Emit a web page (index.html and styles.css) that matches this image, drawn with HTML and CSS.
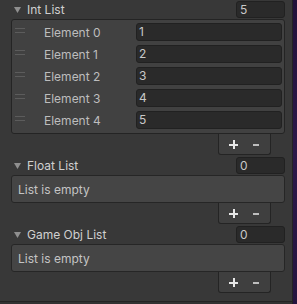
FILE: index.html
```html
<!DOCTYPE html>
<html>
<head>
<meta charset="utf-8">
<link rel="stylesheet" href="styles.css">
</head>
<body>
<div class="inspector">
  <div class="content">
    <section class="list">
      <div class="list-header">
        <svg class="foldout" width="7" height="6" viewBox="0 0 7 6"><polygon points="0,0 7,0 3.5,6" fill="#8f8f8f"/></svg>
        <span class="list-title">Int List</span>
        <div class="size-field">5</div>
      </div>
      <div class="list-body">
        <div class="row"><span class="handle"></span><span class="label">Element 0</span><div class="field">1</div></div>
        <div class="row"><span class="handle"></span><span class="label">Element 1</span><div class="field">2</div></div>
        <div class="row"><span class="handle"></span><span class="label">Element 2</span><div class="field">3</div></div>
        <div class="row"><span class="handle"></span><span class="label">Element 3</span><div class="field">4</div></div>
        <div class="row"><span class="handle"></span><span class="label">Element 4</span><div class="field">5</div></div>
      </div>
      <div class="footer"><span class="plus"></span><span class="minus"></span></div>
    </section>
    <section class="list">
      <div class="list-header">
        <svg class="foldout" width="7" height="6" viewBox="0 0 7 6"><polygon points="0,0 7,0 3.5,6" fill="#8f8f8f"/></svg>
        <span class="list-title">Float List</span>
        <div class="size-field">0</div>
      </div>
      <div class="list-empty">List is empty</div>
      <div class="footer"><span class="plus"></span><span class="minus"></span></div>
    </section>
    <section class="list">
      <div class="list-header">
        <svg class="foldout" width="7" height="6" viewBox="0 0 7 6"><polygon points="0,0 7,0 3.5,6" fill="#8f8f8f"/></svg>
        <span class="list-title">Game Obj List</span>
        <div class="size-field">0</div>
      </div>
      <div class="list-empty">List is empty</div>
      <div class="footer"><span class="plus"></span><span class="minus"></span></div>
    </section>
  </div>
  <div class="statusline"></div>
</div>
<div class="edge"></div>
<div class="accent"></div>
</body>
</html>
```
FILE: styles.css
```css
* { box-sizing: border-box; margin: 0; padding: 0; }
html, body { width: 297px; height: 304px; overflow: hidden; }
body {
  background: #383838;
  font-family: Inter, "Noto Sans", sans-serif;
  font-size: 12px;
  color: #c4c4c4;
  display: flex;
}
.inspector { flex: 1; display: flex; flex-direction: column; }
.content { flex: 1; padding: 0 7px 0 11px; display: flex; flex-direction: column; }
.statusline { height: 3px; border-top: 1px solid #232323; background: #323232; }
.edge { width: 1px; background: #232323; }
.accent { width: 4px; background: linear-gradient(#22113a, #2c1849 50%, #25143f); }

.list { display: flex; flex-direction: column; margin-bottom: 1px; }
.list-header { height: 19px; display: flex; align-items: center; }
.foldout { margin-left: 3px; margin-right: 6px; flex: none; }
.list-title { color: #d0d0d0; }
.size-field {
  margin-left: auto;
  width: 49px; height: 17px;
  background: #2a2a2a;
  border: 1px solid #212121;
  border-radius: 3px;
  padding-left: 3px;
  line-height: 15px;
  color: #c8c8c8;
}

.list-body {
  background: #414141;
  border: 1px solid #242424;
  border-radius: 3px;
  padding: 1px 0 2px;
}
.row { height: 22px; display: flex; align-items: center; }
.handle {
  width: 10px; height: 5px;
  margin-left: 3px;
  border-top: 1px solid #5c5c5c;
  border-bottom: 1px solid #5c5c5c;
  align-self: flex-start;
  margin-top: 7px;
  flex: none;
}
.label { width: 92px; margin-left: 19px; flex: none; color: #bdbdbd; }
.field {
  flex: 1;
  height: 18px;
  margin-right: 2px;
  background: #2a2a2a;
  border: 1px solid #212121;
  border-radius: 3px;
  padding-left: 2px;
  line-height: 16px;
  color: #c8c8c8;
}

.list-empty {
  height: 28px;
  background: #454545;
  border: 1px solid #262626;
  border-radius: 3px;
  padding-left: 6px;
  display: flex; align-items: center;
  color: #c4c4c4;
}

.footer {
  align-self: flex-end;
  margin-right: 14px;
  width: 53px; height: 21px;
  background: #3f3f3f;
  border: 1px solid #242424;
  border-top: none;
  border-radius: 0 0 3px 3px;
  display: flex; align-items: center;
  padding-left: 10px;
}
.plus { position: relative; width: 9px; height: 9px; flex: none; }
.plus::before, .plus::after { content: ""; position: absolute; background: #e6e6e6; }
.plus::before { left: 0; top: 4px; width: 9px; height: 2px; }
.plus::after { left: 4px; top: 0; width: 2px; height: 9px; }
.minus { width: 6px; height: 2px; margin-left: 15px; margin-top: 1px; background: #bdbdbd; flex: none; }
```
